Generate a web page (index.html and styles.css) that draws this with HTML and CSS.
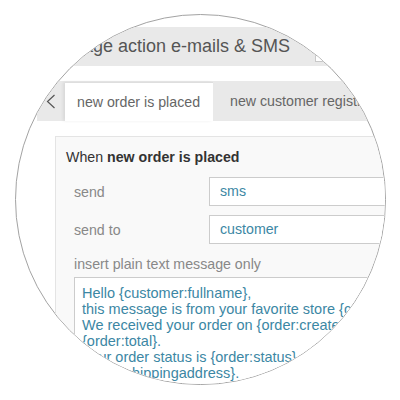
FILE: index.html
```html
<!DOCTYPE html>
<html lang="en">
  <head>
    <meta charset="UTF-8" />
    <meta name="viewport" content="width=device-width, initial-scale=1.0" />
    <title>Manage action e-mails &amp; SMS</title>
    <link rel="stylesheet" href="styles.css">
  </head>
  <body>
    <div class="lens">
      <div class="screen">
        <div class="titlebar">
          <span class="title">Manage action e-mails &amp; SMS</span>
          <span class="search"></span>
        </div>

        <div class="tabbar">
          <button class="tab-prev" type="button">
            <svg width="10" height="15" viewBox="0 0 10 15">
              <polyline points="8.5,1 1.5,7.5 8.5,14" fill="none" stroke="#555" stroke-width="1.2" />
            </svg>
          </button>
          <div class="tab active">new order is placed</div>
          <div class="tab">new customer registration</div>
        </div>

        <div class="panel">
          <div class="panel-head">When <b>new order is placed</b></div>
          <div class="field">
            <label>send</label>
            <div class="input">sms</div>
          </div>
          <div class="field">
            <label>send to</label>
            <div class="input">customer</div>
          </div>
          <div class="hint">insert plain text message only</div>
          <div class="message">
            <div>Hello {customer:fullname},</div>
            <div>this message is from your favorite store {company:name}.</div>
            <div>We received your order on {order:created} with a total of</div>
            <div>{order:total}.</div>
            <div>Your order status is {order:status} and it will be shipped to</div>
            <div>{order:shippingaddress}.</div>
            <div>Thank you!</div>
          </div>
        </div>
      </div>
    </div>
  </body>
</html>
```

FILE: styles.css
```css
body {
  margin: 0;
  background-color: #fff;
  font-family: "Liberation Sans", Arial, sans-serif;
}
.lens {
  box-sizing: border-box;
  width: 371px;
  height: 371px;
  margin: 14px 0 0 15px;
  border: 1px solid #a3a3a3;
  border-radius: 50%;
  overflow: hidden;
  background-color: #fff;
}
.screen {
  width: 640px;
  padding-top: 12px;
}
.titlebar {
  display: flex;
  gap: 25px;
  height: 39px;
  padding-left: 32px;
  background-color: #e9e9e9;

  .title {
    font-size: 18px;
    line-height: 39px;
    color: #555;
    white-space: nowrap;
  }

  .search {
    align-self: flex-end;
    width: 200px;
    height: 28px;
    margin-bottom: 4px;
    box-sizing: border-box;
    border: 1px solid #c8c8c8;
    background-color: #fff;
  }
}
.tabbar {
  display: flex;
  height: 40px;
  margin: 15px 0 0 21px;
  background-color: #e9e9e9;

  .tab-prev {
    width: 28px;
    padding: 0;
    border: 0;
    background: transparent;
    display: flex;
    align-items: center;
    justify-content: center;
  }

  .tab {
    padding: 0 13px 0 12px;
    margin-right: 5px;
    font-size: 14.2px;
    line-height: 40px;
    color: #666;
    white-space: nowrap;
  }

  .active {
    box-sizing: border-box;
    width: 148px;
    margin-top: 1px;
    line-height: 38px;
    border-top: 1px solid #dedede;
    background-color: #fff;
    box-shadow: -2px 0 3px rgba(0, 0, 0, 0.07);
  }
}
.panel {
  margin: 15px 0 0 39px;
  padding: 12px 0 0 10px;
  height: 300px;
  border: 1px solid #e4e4e4;
  background-color: #f9f9f9;
  font-size: 14.2px;
}
.panel-head {
  line-height: 16px;
  color: #333;
  margin-bottom: 12px;
}
.field {
  display: flex;
  align-items: center;
  margin: 0 0 9px 8px;

  label {
    width: 135px;
    color: #888;
  }

  .input {
    flex: 1;
    height: 29px;
    box-sizing: border-box;
    padding-left: 10px;
    line-height: 27px;
    border: 1px solid #cccccc;
    background-color: #fff;
    color: #3c87a4;
  }
}
.hint {
  margin: 12px 0 5px 8px;
  line-height: 16px;
  color: #888;
}
.message {
  margin-left: 8px;
  padding: 7px 0 0 7px;
  height: 200px;
  border: 1px solid #cccccc;
  background-color: #fff;
  font-size: 14.5px;
  line-height: 16px;
  color: #3c87a4;
  white-space: nowrap;
}
```
